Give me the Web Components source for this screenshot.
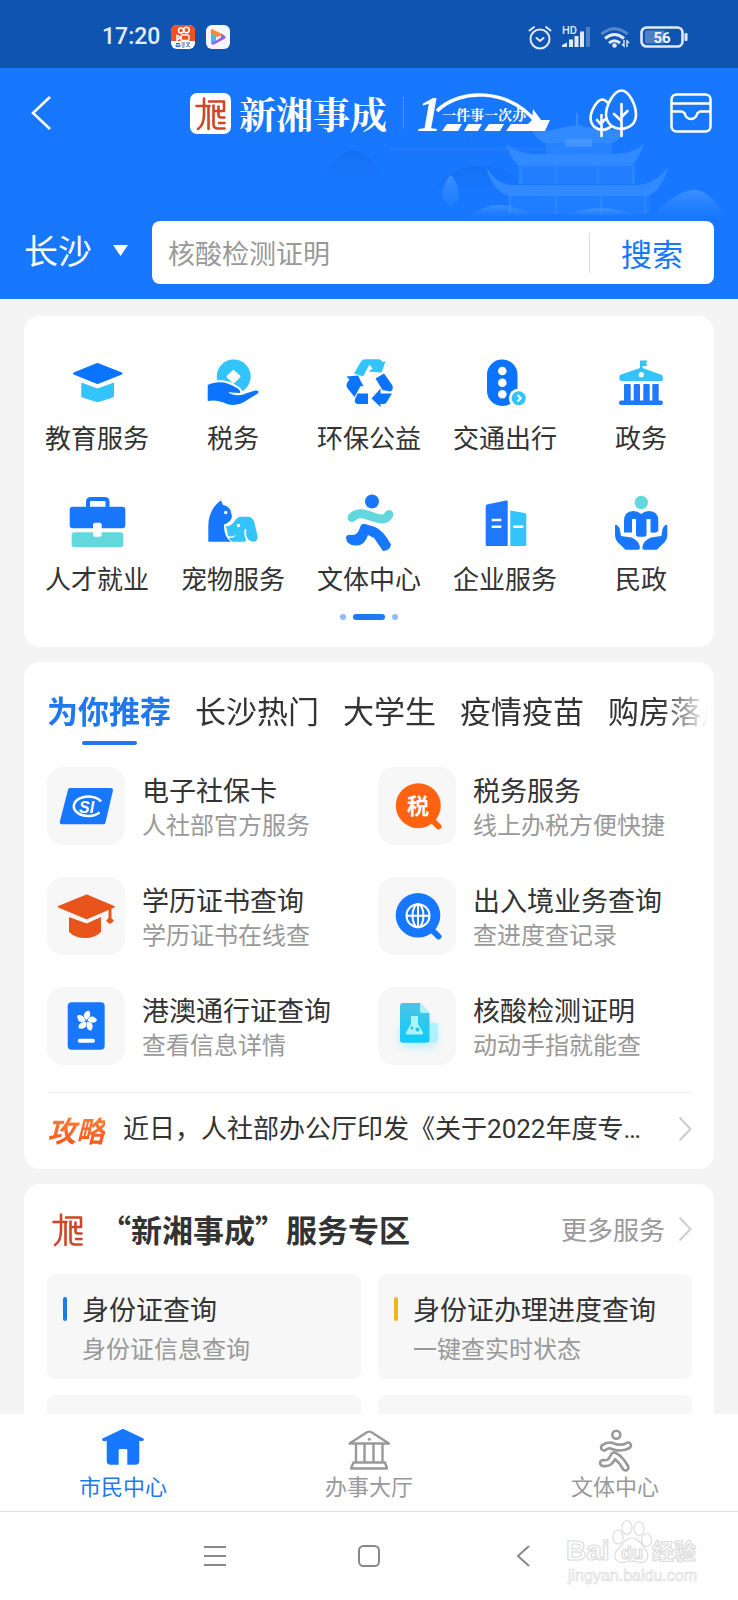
<!DOCTYPE html>
<html lang="zh-CN">
<head>
<meta charset="utf-8">
<meta name="viewport" content="width=device-width, initial-scale=1">
<title>新湘事成</title>
<style>
  :root {
    --blue: #1877ff;
    --ink: #333;
    --muted: #999;
    --page: #f4f4f4;
    --tile: #f7f7f7;
  }
  html, body { margin: 0; height: 100%; background: var(--page); }
  body { font-family: "Noto Sans CJK SC", "Noto Sans", sans-serif; color: var(--ink); }
</style>
</head>
<body>
<app-shell>
  <status-bar slot="top"></status-bar>
  <app-header slot="top"></app-header>

  <content-card>
    <service-grid>
      <service-item icon="education">教育服务</service-item>
      <service-item icon="tax">税务</service-item>
      <service-item icon="recycle">环保公益</service-item>
      <service-item icon="traffic">交通出行</service-item>
      <service-item icon="government">政务</service-item>
      <service-item icon="briefcase">人才就业</service-item>
      <service-item icon="pets">宠物服务</service-item>
      <service-item icon="sport">文体中心</service-item>
      <service-item icon="company">企业服务</service-item>
      <service-item icon="civil">民政</service-item>
    </service-grid>
  </content-card>

  <content-card>
    <tab-strip tabs="为你推荐,长沙热门,大学生,疫情疫苗,购房落户"></tab-strip>
    <two-columns class="apps">
      <app-entry icon="sicard" name="电子社保卡">人社部官方服务</app-entry>
      <app-entry icon="taxsearch" name="税务服务">线上办税方便快捷</app-entry>
      <app-entry icon="diploma" name="学历证书查询">学历证书在线查</app-entry>
      <app-entry icon="globe" name="出入境业务查询">查进度查记录</app-entry>
      <app-entry icon="permit" name="港澳通行证查询">查看信息详情</app-entry>
      <app-entry icon="flask" name="核酸检测证明">动动手指就能查</app-entry>
    </two-columns>
    <news-row>近日，人社部办公厅印发《关于2022年度专…</news-row>
  </content-card>

  <content-card>
    <zone-heading>“新湘事成”服务专区</zone-heading>
    <two-columns>
      <zone-entry name="身份证查询">身份证信息查询</zone-entry>
      <zone-entry name="身份证办理进度查询" accent="#f0b51c">一键查实时状态</zone-entry>
      <zone-entry></zone-entry>
      <zone-entry></zone-entry>
    </two-columns>
  </content-card>

  <tab-bar slot="bottom"></tab-bar>
  <nav-keys slot="bottom"></nav-keys>
</app-shell>

<script>
const B = '#0a74ff', C = '#33c3fd', T = '#62d8dc';

const seal = `<g fill="none" stroke="#cf4527" stroke-width="2.600" stroke-linejoin="round" stroke-linecap="round">
  <path d="M6.500 13H19.500M14 5.500V21Q14 32 8 36M18.500 13V36"/>
  <path d="M19 8.500H34V18H23.500M23.500 12.500V31Q23.500 35.500 28 35.500H34.500M28.500 13.500V22Q28.500 24.500 31 24.500H34.500M34.500 30H29"/></g>`;

const ICONS = {
  education: [60, 60, `<path fill="${B}" stroke="${B}" stroke-linejoin="round" stroke-width="2" d="M7 19.500 30.500 10 54.500 19.500 30.500 29Z"/><path fill="${C}" d="M14.300 28.500 30.500 34.500 47 28.500V42Q47 43 46 43.500L31.500 48Q30.500 48.300 29.500 48L15.300 43.500Q14.300 43 14.300 42Z"/>`],
  tax: [60, 60, `<circle cx="30.700" cy="22.500" r="17" fill="${C}"/><path fill="#fff" stroke="#fff" stroke-width="2" stroke-linejoin="round" d="M30.500 17 36.500 22.500 30.500 28.500 24.500 22.500Z"/>
    <path fill="${B}" stroke="#fff" stroke-width="4" paint-order="stroke" d="M4.700 31C14 26 25 28 33 33.500Q38 36 37 39L27 38.500Q33 42 41 40L49 37.500Q54 35.500 55.500 37.500 56 39 54 40L41 48Q34 52.500 24 50 14 45 4.700 47Z"/><path d="M26 38.500Q32 42 41 39.500" fill="none" stroke="#fff" stroke-width="1.400"/>`],
  recycle: [60, 60, `<path fill="${C}" d="M15 19.500 22 7.500Q23.500 5.300 26 5.300H40Q42 5.300 43.500 8L46.500 7.500 42.500 18.500 29.500 17.500 33.500 14.500 30.500 10.500 24 22.500Z"/>
    <path fill="${B}" d="M7.500 22.500 19 21.500 24.500 32.500 21.500 32 15.500 43 8 33.500Q6.500 31.500 8 29L10.500 25.500ZM18.500 39.500H29V50H18Q14.500 48.500 16.500 44ZM36.500 24.500 45 19.500 53.500 31.500Q54.500 36 51.500 37.500L43.500 36ZM32.500 44.500 41.500 34.500V39.500H53L47.500 48.500Q46.500 50 44.500 50H41.500V53Z"/>`],
  traffic: [60, 60, `<rect x="12" y="5.500" width="30.500" height="46.500" rx="15" fill="${B}"/><g fill="#fff"><circle cx="27.300" cy="17" r="4.300"/><circle cx="27.300" cy="28.700" r="4.300"/><circle cx="27.300" cy="40.300" r="4.300"/><circle cx="43.700" cy="44.300" r="9.800"/></g><circle cx="43.700" cy="44.300" r="7" fill="${C}"/><path d="M42.500 41 45.800 44.300 42.500 47.600" fill="none" stroke="#fff" stroke-width="2"/>`],
  government: [60, 60, `<path fill="${C}" d="M29 6.500H36.500L35 9.500 36.500 12H31.500V14L51 21Q53 25 51 27H10Q7 25 9 21L29 14Z"/><circle cx="30.300" cy="20.700" r="2.600" fill="#fff"/><path fill="#1f7af8" d="M13 31Q13 30 14 30H18.700Q19.700 30 19.700 31V46.500H22.700V31Q22.700 30 23.700 30H28Q29 30 29 31V46.500H32.300V31Q32.300 30 33.300 30H37.700Q38.700 30 38.700 31V46.500H41.300V31Q41.300 30 42.300 30H46.700Q47.700 30 47.700 31V46.500H50Q52 46.500 52 48.700T50 51H10Q8 51 8 48.700T10 46.500H13Z"/>`],
  briefcase: [60, 60, `<path d="M21 12V7Q21 4 24 4H37.500Q40.500 4 40.500 7V12" fill="none" stroke="#1877ff" stroke-width="4"/><rect x="2.700" y="11.700" width="55.600" height="21.600" rx="3" fill="#1877ff"/><rect x="4.700" y="37.300" width="51.600" height="15" rx="3" fill="${T}"/><rect x="26" y="27.700" width="8.700" height="14" rx="2" fill="#fff"/>`],
  pets: [60, 60, `<path fill="#1877ff" d="M5.300 46.700V31C5.300 19 11 10 18 5.300L20 10C26 11 28 15 28 18 30 21 29 27 21 29.500 21 38 23 43 28 46.700Z"/><circle cx="22.700" cy="17.500" r="1.700" fill="#fff"/>
    <path fill="${C}" d="M22.500 31.500Q29 31 32 25.500 34.500 21.700 38 21.700H45Q50 22 51.500 28L54.500 41Q55 46.700 50 46.700 45 46 42.500 43 44 46.700 41 46.700H29.500Q27 45.500 26 43 31 43.500 33 40 27 43 24.500 40 25 36 22.500 31.500Z"/><circle cx="35.500" cy="30.500" r="1.700" fill="#fff"/><path d="M42.500 34Q41 42 46 46.500" fill="none" stroke="#fff" stroke-width="1.800"/>`],
  sport: [60, 60, `<circle cx="33" cy="6.500" r="7" fill="#1877ff"/><path d="M13 22.500C20 15.500 28 20 34 22S46 26.500 50 19.500" fill="none" stroke="${T}" stroke-width="9" stroke-linecap="round"/><path fill="#1877ff" d="M7 42Q8 39 13 40Q18 40 20 35L22 30Q23 28.500 26 29L36 32Q44 35 52 49.500 51 56 44 56L35 43 29 40Q26 50 18 50.500 7 51 7 42Z"/>`],
  company: [60, 60, `<path fill="#1f78fb" d="M10.700 11.500Q10.700 10 12 9.600L31 5.400Q32.700 5 32.700 7V51H12Q10.700 51 10.700 49.700Z"/><path fill="${C}" d="M35.300 15.500 50 18Q51.300 18.400 51.300 20V49.700Q51.300 51 50 51H35.300Z"/><path d="M16.700 25H26.300M16.700 31.700H26.300M38.300 31.700H48.300" stroke="#fff" stroke-width="2.600"/>`],
  civil: [60, 60, `<circle cx="30.300" cy="7.500" r="6.700" fill="${T}"/><path fill="#1877ff" d="M13 37V26Q13 16 22.500 16 27 16 30.200 19 33.500 16 38 16 47.300 16 47.300 26V36Q45 38.500 41 37.500L39.500 37.500V24H35.500V39Q35.500 41.700 33 41.700H27.500Q25 41.700 25 39V24H21V37.500H13ZM4 31Q4 29 6 30L8.500 33 10 41 20.500 42.500Q28.500 46 29 52.500 29 54.700 27 54.700H14.500L6.500 47Q4 44 4 40ZM56.300 31Q56.300 29 54.300 30L51.800 33 50.300 41 39.800 42.500Q31.800 46 31.300 52.500 31.300 54.700 33.300 54.700H45.800L53.800 47Q56.300 44 56.300 40Z"/>`],

  sicard: [78, 78, `<path fill="#1877ff" stroke="#1877ff" stroke-width="4" stroke-linejoin="round" d="M23 23H64L56.500 55.300H14.700Z"/><path d="M54 34.500A14.500 9.800 0 1 0 52.500 45.500" fill="none" stroke="#fff" stroke-width="2.600"/><text x="32" y="45.500" font-family="Liberation Sans, sans-serif" font-weight="700" font-style="italic" font-size="16" fill="#fff">SI</text>`],
  diploma: [78, 78, `<g fill="#e9541c"><path stroke="#e9541c" stroke-width="1.500" stroke-linejoin="round" d="M11.500 29.700 39.700 18.200 67 29.700 39.700 41.500Z"/><path d="M22 40 39.700 46.500 54 40V55Q48 61 38 61T22 55Z"/><path d="M61.500 31H64.500V41L67 44 63 47 59 44 61.500 41Z"/></g>`],
  permit: [78, 78, `<rect x="20.700" y="15.300" width="37" height="47.500" rx="4" fill="#1877ff"/><g fill="#fff" transform="translate(39.500 34)">${[0, 72, 144, 216, 288].map(a => `<path transform="rotate(${a})" d="M0-1C-4-4-4-8 2-10.500 5-8 4-4 0-1Z"/>`).join('')}</g><rect x="30.700" y="51.700" width="17.300" height="4" rx="2" fill="#fff"/>`],
  taxsearch: [78, 78, `<path d="M52 51 60.500 59.500" stroke="#ff6210" stroke-width="6" stroke-linecap="round"/><circle cx="40.300" cy="38.700" r="22.500" fill="#ff6210"/><text x="40" y="47" text-anchor="middle" font-family="Noto Sans CJK SC, sans-serif" font-weight="700" font-size="22" fill="#fff">税</text>`],
  globe: [78, 78, `<path d="M52 51 60.500 59.500" stroke="#1877ff" stroke-width="6" stroke-linecap="round"/><circle cx="40" cy="38.300" r="22.300" fill="#1877ff"/><g fill="none" stroke="#fff" stroke-width="2"><circle cx="40" cy="38.700" r="11.500"/><ellipse cx="40" cy="38.700" rx="5.500" ry="11.500"/><path d="M40 27V50M28.500 38.700H51.500"/></g>`],
  flask: [78, 78, `<defs><linearGradient id="f" x2="0" y2="1"><stop stop-color="#4cc4e6"/><stop offset="1" stop-color="#0fcbfa"/></linearGradient><filter id="b" x="-50%" y="-50%" width="200%" height="200%"><feGaussianBlur stdDeviation="4"/></filter></defs><rect x="22" y="36" width="36" height="25" rx="6" fill="#bff0fb" filter="url(#b)"/><path fill="#aef2fb" d="M48 35.700H56Q60 35.700 60 40V51Q60 55.500 56 55.500H48Z"/><path fill="url(#f)" d="M22 19Q22 16 25 16H42L51.500 26V52.500Q51.500 55.700 48 55.700H25Q22 55.700 22 52.500Z"/><path fill="#aef2fb" d="M42 16 51.500 26H44Q42 26 42 24Z"/><path fill="#aef2fb" d="M33 29H40V37L45 45.500Q45.500 47.500 43.500 47.500H29.500Q27.500 47.500 28 45.500L33 37Z"/><circle cx="34" cy="41" r="1.500" fill="#24bfe8"/><circle cx="39.500" cy="42.500" r="2" fill="#24bfe8"/>`],

  home: [44, 44, `<path fill="#1877ff" d="M22 3.700 43 13.700Q43 16.500 40 16.200L38.300 15.500V36Q38.300 39.700 34.500 39.700H26.300V25Q26.300 24 25.300 24H18.700Q17.700 24 17.700 25V39.700H9.500Q5.700 39.700 5.700 36V15.500L4 16.200Q1 16.500 1 13.700Z"/>`],
  hall: [44, 44, `<g fill="none" stroke="#999" stroke-width="2.400" stroke-linejoin="round"><path d="M2.500 18.500 20 7.300Q22.300 6 24.500 7.300L42 18.500ZM9 19V37M17.500 19V37M26.500 19V37M35.500 19V37M6.500 37.500H38L40 43.500H4Z"/></g><circle cx="22.300" cy="14.300" r="1.500" fill="#999"/>`],
  runner: [44, 44, `<g fill="none" stroke="#999" stroke-linecap="round" stroke-linejoin="round"><circle cx="23.300" cy="9.700" r="4" stroke-width="2.600"/><path stroke-width="8.500" d="M11 22.500C17 18 20 22 25 22.500S32 22.500 35 20.500"/><path stroke-width="8.500" d="M10 38C16 39 18 36 21 30.500Q27 33 32.500 42.500"/><g stroke="#fff" stroke-width="3.200"><path d="M11 22.500C17 18 20 22 25 22.500S32 22.500 35 20.500"/><path d="M10 38C16 39 18 36 21 30.500Q27 33 32.500 42.500"/></g></g>`],

  back: [28, 40, `<path d="M22 4 5 20 22 36" fill="none" stroke="#fff" stroke-width="2.600"/>`],
  seal: [41, 41, seal],
  trees: [48, 48, `<g fill="none" stroke="#fff" stroke-width="2.600" stroke-linecap="round" stroke-linejoin="round"><path d="M19 14Q16 10.500 13 10.500C8 11 1.500 22 1.500 29.500Q2 39 12.500 41 19 40.500 22 37.500M12.500 26V47M12.500 36 8 31M12.500 34 16.500 30"/><path d="M32.500 1.500C25 1.500 17 16 17 26Q18 38.500 32 40 46.500 38.500 47 26C47 16 40 1.500 32.500 1.500ZM32.500 15V47M32.500 32 25 25M32.500 28 38.500 22"/></g>`],
  tray: [42, 40, `<g fill="none" stroke="#fff" stroke-width="2.500" stroke-linejoin="round"><rect x="1.500" y="1.500" width="39" height="37" rx="5"/><path d="M1.500 10.500H40.500M1.500 18.500H12L14.500 20Q16 26 21 26T27.500 20L30 18.500H40.500"/></g>`],
  chevron: [14, 26, `<path d="M1.500 1.500 12.500 13 1.500 24.500" fill="none" stroke="#ccc" stroke-width="2"/>`],

  kuaishou: [24, 24, `<rect width="24" height="24" rx="6" fill="#fff"/><path fill="#f1501f" d="M0 16V6Q0 0 6 0H18Q24 0 24 6V16Z"/><g fill="none" stroke="#fff" stroke-width="1.500"><circle cx="10" cy="5.500" r="2.500"/><circle cx="15.500" cy="5" r="2.700"/><rect x="10" y="10" width="8" height="5.500" rx="1.500"/><path d="M6 10.500 9.500 12.500 6 15Z"/></g><path d="M5 18.500H9M5 21.500H9V20H5ZM10.500 18H14M10.500 20H14M11 22H13.500M15 18H19M15.500 22 18 18M16 20 19 22" fill="none" stroke="#3c6fb5" stroke-width="1"/>`],
  player: [24, 24, `<rect width="24" height="24" rx="6" fill="#f6f6fa"/><path fill="#ff8a3c" d="M5 5Q5 3.500 7 4.500L17 9.500 11 12 5 9Z"/><path fill="#48b8f5" d="M5 8 10 11V16L6.500 19.500Q5 19.500 5 18Z"/><path fill="#9a5cf0" d="M15 8.500 19 11Q20.500 12.200 19 13.500L8 19.500Q6 20 5.500 18.500L15 12.500Z"/>`],
  alarm: [24, 25, `<g fill="none" stroke="#dfe9fa" stroke-width="2" stroke-linecap="round"><circle cx="12" cy="14" r="9.500"/><path d="M1.500 5.500 6 2M22.500 5.500 18 2M8.500 13 12 16 15.500 13"/></g>`],
  signal: [28, 25, `<g fill="#dfe9fa"><path d="M0 22V20L5 17.500V22Z"/><rect x="7" y="14.500" width="4" height="7.500"/><rect x="12.500" y="11" width="4" height="11"/><rect x="18" y="6.500" width="4" height="15.500"/><rect x="24" y="2" width="4" height="20" opacity=".3"/></g><text x="0" y="9" font-family="Roboto, sans-serif" font-weight="500" font-size="11" fill="#dfe9fa">HD</text>`],
  wifi: [30, 25, `<g fill="none" stroke="#dfe9fa" stroke-width="3"><path opacity=".35" d="M1.500 9Q14.500-1.500 27.500 9"/><path d="M5 13.500Q14.500 5.500 24 13.500M9 18Q14.500 13.500 20 18"/><path stroke-width="1.400" d="M24 15V21L22 19M27 22V16L29 18"/></g><circle cx="14.500" cy="20.500" r="2.300" fill="#dfe9fa"/>`],
  battery: [48, 22, `<rect x="1.500" y="1.500" width="41" height="19" rx="5" fill="none" stroke="#dfe9fa" stroke-width="2.600"/><rect x="5" y="4.500" width="20" height="13" rx="2" fill="#dfe9fa" opacity=".3"/><rect x="44.500" y="7" width="3" height="8" rx="1" fill="#dfe9fa"/><text x="22" y="16.500" text-anchor="middle" font-family="Roboto, sans-serif" font-weight="700" font-size="15" fill="#eef4ff">56</text>`],

  bridge: [130, 44, `<path fill="none" stroke="#fff" stroke-width="3.500" d="M17 20C40-3 88-3 116 31"/><text x="-3" y="40" font-family="Liberation Serif, serif" font-weight="700" font-style="italic" font-size="50" fill="#fff">1</text><path fill="#fff" d="M27 33H42L38 40H22ZM48 33H62L58 40H44ZM69 33H84L80 40H64ZM91 33H108L112 29 113 18 121 29H130L125 40H86Z"/><text x="22" y="29" font-family="Noto Serif CJK SC, Noto Sans CJK SC, serif" font-weight="700" font-size="14" fill="#fff">一件事一次办</text>`],

  menu: [22, 22, `<path d="M0 2H22M0 11H22M0 20H22" stroke="#888" stroke-width="2"/>`],
  square: [22, 22, `<rect x="1" y="1" width="20" height="20" rx="4.500" fill="none" stroke="#888" stroke-width="2"/>`],
  left: [14, 22, `<path d="M13 1 2 11 13 21" fill="none" stroke="#888" stroke-width="2"/>`],
};

/* Registers an element whose shadow root is cloned from a template. */
function define(tag, css, html, ready) {
  const tpl = document.createElement('template');
  tpl.innerHTML = `<style>:host,*{box-sizing:border-box}a{color:inherit;text-decoration:none}button,input,select{font:inherit;color:inherit;background:none;border:0;padding:0;margin:0}${css}</style>${html}`;
  customElements.define(tag, class extends HTMLElement {
    constructor() { super(); this.attachShadow({ mode: 'open' }).append(tpl.content.cloneNode(true)); }
    connectedCallback() { if (ready) ready.call(this, this.shadowRoot); }
  });
}

define('ui-icon', ':host{display:block;flex:none}svg{display:block;overflow:visible}', '<div></div>', function (root) {
  const [w, h, body] = ICONS[this.getAttribute('name')];
  root.querySelector('div').innerHTML = `<svg width="${w}" height="${h}" viewBox="0 0 ${w} ${h}" aria-hidden="true">${body}</svg>`;
});

define('app-shell', `
  :host{display:flex;flex-direction:column;height:100vh;background:var(--page)}
  main{flex:1;min-height:0;overflow-y:auto;scrollbar-width:none;padding:17px 24px 0;display:flex;flex-direction:column;gap:15px}
  header,footer{flex:none}`,
  '<header><slot name="top"></slot></header><main><slot></slot></main><footer><slot name="bottom"></slot></footer>');

define('status-bar', `
  :host{display:flex;align-items:center;height:68px;padding:6px 50px 0 102px;background:#1054b2;color:#e4edfb;font:500 23px/28px Roboto,sans-serif}
  .left,.right{display:flex;align-items:center;gap:11px}
  .right{margin-left:auto;gap:10px}`,
  `<div class="left"><time>17:20</time><ui-icon name="kuaishou"></ui-icon><ui-icon name="player"></ui-icon></div>
   <div class="right"><ui-icon name="alarm"></ui-icon><ui-icon name="signal"></ui-icon><ui-icon name="wifi"></ui-icon><ui-icon name="battery"></ui-icon></div>`);

define('app-header', `
  :host{display:block;position:relative;padding:0 24px 15px;background:var(--blue);color:#fff;overflow:hidden}
  .art{position:absolute;right:0;top:0}
  .top{position:relative;display:grid;grid-template-columns:1fr auto 1fr;align-items:center;height:90px;padding:0 2px 0 4px}
  .brand{display:flex;align-items:center}
  .mark{background:#fff;border-radius:7px}
  .name{margin-left:8px;font:700 37px/48px "Noto Serif CJK SC","Noto Sans CJK SC",serif}
  .rule{width:1px;height:32px;margin:0 16px;background:#4b95ff}
  .actions{display:flex;justify-content:flex-end;align-items:center;gap:33px}
  button{display:block}
  search-row{position:relative;margin-top:63px}`,
  `<svg class="art" width="448" height="231" viewBox="290 68 448 231" aria-hidden="true">
    <defs>
      <linearGradient id="m" x2="0" y2="1"><stop stop-color="#0f69ee" stop-opacity=".5"/><stop offset="1" stop-color="#1877ff" stop-opacity="0"/></linearGradient>
      <linearGradient id="l" x2="0" y2="1"><stop stop-color="#4b9bff" stop-opacity=".75"/><stop offset="1" stop-color="#3089ff" stop-opacity=".1"/></linearGradient>
    </defs>
    <path fill="url(#m)" d="M305 205Q325 180 332 163 353 138 374 163 384 195 402 205Z"/>
    <path fill="url(#m)" d="M415 206Q440 180 450 173 480 158 512 175L540 206Z"/>
    <path fill="#2b84ff" opacity=".35" d="M390 147H560V151H390Z"/>
    <g fill="#318aff">
      <path d="M576 113H578V127H576Z"/>
      <path d="M531 128Q545 134 560 128L577 125 594 128Q612 134 628 124 622 140 612 143H544Q535 138 531 128Z"/>
      <path opacity=".6" d="M546 143H612V154H546Z"/>
      <path d="M506 144Q520 156 545 154H610Q632 155 644 144 638 160 632 166H520Q512 162 506 144Z"/>
      <path opacity=".45" d="M519 166H634V184H519Z"/>
      <path d="M486 167Q498 186 515 185H638Q655 184 668 167 662 190 648 196H508Q492 190 486 167Z"/>
      <path opacity=".35" d="M508 196H650V214H508Z"/>
      <path opacity=".7" d="M519 166H522V184H519ZM555 166H557V184H555ZM597 166H599V184H597ZM632 166H635V184H632ZM509 196H511V214H509ZM555 196H557V214H555ZM600 196H602V214H600ZM644 196H646V214H644Z"/>
    </g>
    <path fill="#5aa3ff" opacity=".5" d="M565 139H592V147H565Z"/>
    <path fill="url(#l)" d="M450.500 175C456 180 459 188 459 195Q458 204 450.500 205 443 204 442 195C442 188 446 180 450.500 175ZM450 205H451V214H450Z"/>
    <g fill="url(#l)"><path d="M470 216Q498 194 532 216Z"/><path d="M565 216Q600 200 636 216Z"/><path d="M652 216Q675 192 692 190T724 216Z"/></g>
  </svg>
  <div class="top">
    <button aria-label="返回"><ui-icon name="back"></ui-icon></button>
    <div class="brand"><ui-icon class="mark" name="seal"></ui-icon><span class="name">新湘事成</span><span class="rule"></span><ui-icon name="bridge"></ui-icon></div>
    <div class="actions"><button aria-label="湘林"><ui-icon name="trees"></ui-icon></button><button aria-label="卡包"><ui-icon name="tray"></ui-icon></button></div>
  </div>
  <search-row></search-row>`);

define('search-row', `
  :host{display:flex;align-items:center;gap:24px}
  label{display:flex;align-items:center;gap:21px;flex:none;padding-bottom:5px}
  select{appearance:none;font-size:34px;line-height:48px;color:#fff}
  label svg{pointer-events:none}
  option{color:var(--ink)}
  form{flex:1;min-width:0;display:flex;align-items:center;height:63px;background:#fff;border-radius:8px}
  input{flex:1;min-width:0;height:63px;padding-left:16px;font-size:27px;color:var(--ink);outline:0}
  input::placeholder{color:#999;opacity:1}
  button{width:125px;height:40px;border-left:1px solid #ddd;color:var(--blue);font-size:31px;line-height:36px;cursor:pointer}`,
  `<label><select aria-label="城市"><option>长沙</option></select><svg width="15" height="12" viewBox="0 0 15 12" aria-hidden="true"><path fill="#fff" d="M0 1H15L7.500 12Z"/></svg></label>
   <form><input type="search" aria-label="搜索服务" placeholder="核酸检测证明"><button type="button">搜索</button></form>`);

define('content-card', ':host{display:block;flex:none;padding:0 22px 0 23px;background:#fff;border-radius:16px}', '<slot></slot>');

define('service-grid', `
  :host{display:block;margin:0 -17px 0 -18px;padding:38px 0 27px}
  .grid{display:grid;grid-template-columns:repeat(5,1fr);row-gap:40px}
  .dots{display:flex;justify-content:center;gap:7px;margin-top:18px}
  i{width:6px;height:6px;border-radius:3px;background:#8fbbf8}
  .on{width:32px;background:#1f7af2}`,
  '<div class="grid"><slot></slot></div><div class="dots"><i></i><i class="on"></i><i></i></div>');

define('service-item', ':host{display:block}a{display:flex;flex-direction:column;align-items:center;gap:5px;font-size:26px;line-height:36px;white-space:nowrap}',
  '<a href="#"><span></span><slot></slot></a>',
  function (root) { root.querySelector('span').replaceChildren(icon(this.getAttribute('icon'))); });

define('tab-strip', `
  :host{display:block;padding-top:26px;margin-right:-16px}
  div{display:flex;gap:24px;overflow:hidden;-webkit-mask:linear-gradient(90deg,#000 calc(100% - 48px),transparent);mask:linear-gradient(90deg,#000 calc(100% - 48px),transparent)}
  button{flex:none;display:flex;flex-direction:column;align-items:center;gap:9px;font-size:31px;line-height:44px}
  [aria-selected=true]{color:#1f78ee;font-weight:700}
  [aria-selected=true]::after{content:"";width:55px;height:4px;border-radius:2px;background:#1f78ee}`,
  '<div role="tablist"></div>',
  function (root) {
    root.querySelector('div').innerHTML = this.getAttribute('tabs').split(',')
      .map((t, i) => `<button role="tab" aria-selected="${i === 0}">${t}</button>`).join('');
  });

define('two-columns', `
  :host{display:grid;grid-template-columns:1fr 1fr;gap:16px 17px}
  :host(.apps){row-gap:32px;padding:22px 0 27px}`, '<slot></slot>');

define('app-entry', `
  :host{display:block}
  a{display:flex;align-items:center;gap:17px;white-space:nowrap}
  .tile{flex:none;width:78px;height:78px;border-radius:16px;background:var(--tile)}
  b{display:block;font-weight:400;font-size:27px;line-height:36px}
  small{display:block;font-size:24px;line-height:32px;color:var(--muted)}`,
  '<a href="#"><span class="tile"></span><span><b></b><small><slot></slot></small></span></a>',
  function (root) {
    root.querySelector('.tile').replaceChildren(icon(this.getAttribute('icon')));
    root.querySelector('b').textContent = this.getAttribute('name');
  });

define('news-row', `
  :host{display:block;border-top:1px solid #eee}
  a{display:flex;align-items:center;height:76px;padding-bottom:4px;white-space:nowrap}
  em{font-size:29px;font-weight:700;line-height:36px;color:transparent;background:linear-gradient(#ff8a3c,#f4511e);-webkit-background-clip:text;background-clip:text}
  span{margin-left:18px;font:26px/36px Roboto,"Noto Sans CJK SC",sans-serif}
  ui-icon{margin-left:auto}`,
  '<a href="#"><em>攻略</em><span><slot></slot></span><ui-icon name="chevron"></ui-icon></a>');

define('zone-heading', `
  :host{display:flex;align-items:center;height:90px}
  h2{margin:0 0 0 12px;font-size:31px;line-height:44px;font-weight:700}
  a{display:flex;align-items:center;gap:13px;margin-left:auto;color:var(--muted);font-size:26px;line-height:36px}`,
  '<ui-icon name="seal"></ui-icon><h2><slot></slot></h2><a href="#">更多服务<ui-icon name="chevron"></ui-icon></a>');

define('zone-entry', `
  :host{display:block;height:105px;border-radius:8px;background:var(--tile)}
  a{display:grid;grid-template-columns:4px 1fr;column-gap:15px;align-items:center;padding:17px 16px 0;row-gap:5px;white-space:nowrap}
  i{height:24px;border-radius:2px;background:var(--accent,#1f78ee)}
  b{font-weight:400;font-size:27px;line-height:36px}
  small{grid-column:2;font-size:24px;line-height:32px;color:var(--muted)}`,
  '<a href="#"><i></i><b></b><small><slot></slot></small></a>',
  function (root) {
    if (!this.hasAttribute('name')) { root.querySelector('a')?.remove(); return; }
    root.querySelector('b').textContent = this.getAttribute('name');
    if (this.hasAttribute('accent')) root.querySelector('i').style.setProperty('--accent', this.getAttribute('accent'));
  });

define('tab-bar', `
  :host{display:block;background:#fff;border-bottom:1px solid #ddd}
  nav{display:grid;grid-template-columns:repeat(3,1fr)}
  a{display:flex;flex-direction:column;align-items:center;gap:2px;padding:11px 0 12px;font-size:22px;line-height:28px;color:var(--muted)}
  [aria-current]{color:#1f78ee}`,
  '<nav><a href="#" aria-current="page"><ui-icon name="home"></ui-icon>市民中心</a><a href="#"><ui-icon name="hall"></ui-icon>办事大厅</a><a href="#"><ui-icon name="runner"></ui-icon>文体中心</a></nav>');

define('nav-keys', `
  :host{display:block;position:relative;background:#fff}
  div{display:grid;grid-template-columns:repeat(3,154px);justify-content:center;height:88px}
  button{display:flex;align-items:center;justify-content:center}
  .stamp{position:absolute;right:36px;top:6px;overflow:visible}`,
  `<div><button aria-label="菜单"><ui-icon name="menu"></ui-icon></button><button aria-label="主页"><ui-icon name="square"></ui-icon></button><button aria-label="返回"><ui-icon name="left"></ui-icon></button></div>
   <svg class="stamp" width="136" height="68" viewBox="0 0 136 68"><g fill="#fff" stroke="#dcdcdc" stroke-width="1.200" font-family="Liberation Sans, sans-serif" font-weight="700">
     <text x="0" y="42" font-size="28">Bai</text>
     <ellipse cx="52" cy="19" rx="5" ry="7"/><ellipse cx="61" cy="9.500" rx="5" ry="7"/><ellipse cx="73" cy="10.500" rx="5" ry="7"/><ellipse cx="80.500" cy="22" rx="5" ry="6.500"/>
     <path d="M66 20C73 20 76 28 80 32 84 38 81 45 74 44.500 69 43 62 43 58 44.500 50 45 46 38 51 32 56 28 58 20 66 20Z"/>
     <text x="55" y="41" font-size="18">du</text>
     <text x="86" y="41" font-size="22" font-family="Noto Sans CJK SC, sans-serif">经验</text></g>
     <text x="2" y="63" font-size="16" font-family="Liberation Sans, sans-serif" fill="#fff" stroke="#dcdcdc" stroke-width=".7">jingyan.baidu.com</text></svg>`);

function icon(name) {
  const el = document.createElement('ui-icon');
  el.setAttribute('name', name);
  return el;
}
</script>
</body>
</html>
